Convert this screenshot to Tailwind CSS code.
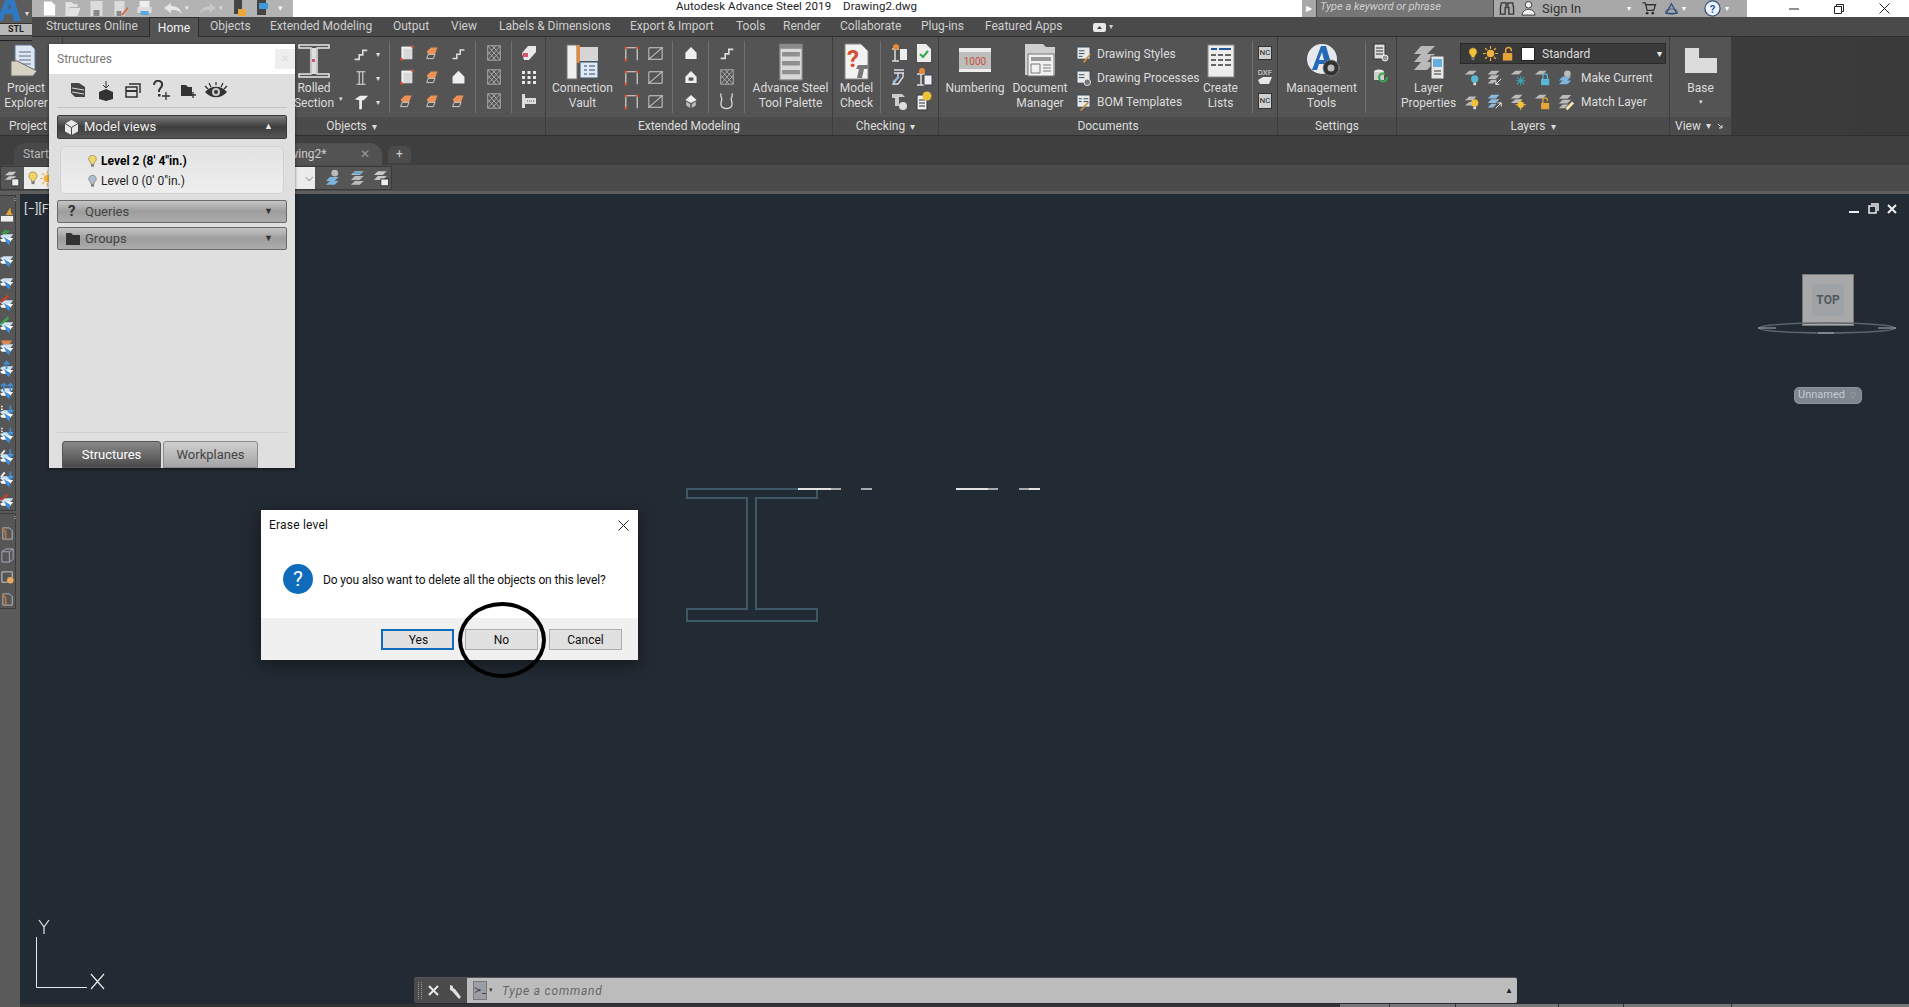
<!DOCTYPE html>
<html lang="en">
<head>
<meta charset="utf-8">
<title>Autodesk Advance Steel 2019</title>
<script src="https://cdn.jsdelivr.net/npm/@tailwindcss/browser@4"></script>
</head>
<body class="m-0">
<svg width="0" height="0" class="absolute">
  <defs>
    <symbol id="bulb" viewBox="0 0 16 16"><path d="M8 1a4.500 4.500 0 0 0-3 8c1 1 1 2 1.200 3h3.600c.2-1 .2-2 1.200-3A4.500 4.500 0 0 0 8 1z" fill="currentColor" stroke="#6b5a2a" stroke-width=".6"/><rect x="6.300" y="12" width="3.400" height="3" fill="#777"/></symbol>
    <symbol id="sun" viewBox="0 0 16 16"><circle cx="8" cy="8" r="4" fill="#f2b13c"/><path d="M8 0v3M8 13v3M0 8h3M13 8h3M2.300 2.300l2 2M11.700 11.700l2 2M13.700 2.300l-2 2M4.300 11.700l-2 2" stroke="#f2b13c" stroke-width="1.300"/></symbol>
    <symbol id="lock" viewBox="0 0 16 16"><rect x="2" y="7" width="10" height="8" fill="#e7a33a"/><path d="M5 7V4a3 3 0 0 1 6 0v1" fill="none" stroke="#e7a33a" stroke-width="1.600"/></symbol>
    <symbol id="boxo" viewBox="0 0 20 20"><rect x="4" y="3" width="12" height="14" fill="#d8d8d8"/><path d="M4 3h12v2H6v12H4z" fill="#f4f4f4"/><circle cx="16" cy="3" r="1.500" fill="#e0502c"/><circle cx="4" cy="17" r="1.500" fill="#e0502c"/></symbol>
    <symbol id="orange" viewBox="0 0 20 20"><path d="M3 8l5-5h8l-3 8H5z" fill="#e99055"/><path d="M5 11h8l-2 5H3z" fill="none" stroke="#ddd"/></symbol>
    <symbol id="mesh" viewBox="0 0 20 20"><path d="M3 2l14 16M8 2l9 10M3 8l9 10M17 2L3 18M12 2L3 12M17 8l-9 10M3 2h14v16H3z" fill="none" stroke="#bbb" stroke-width=".9"/></symbol>
    <symbol id="frame" viewBox="0 0 20 20"><path d="M4 17V4h12v13" fill="none" stroke="#ddd" stroke-width="1.200"/><circle cx="4" cy="4" r="1.400" fill="#e0502c"/><circle cx="16" cy="4" r="1.400" fill="#e0502c"/><circle cx="4" cy="17" r="1.400" fill="#e0502c"/></symbol>
    <symbol id="zig" viewBox="0 0 20 20"><path d="M3 4h14L3 16h14" fill="none" stroke="#ccc" stroke-width="1.100"/><path d="M3 4v12M17 4v12" stroke="#ccc" stroke-width="1"/></symbol>
    <symbol id="house" viewBox="0 0 20 20"><path d="M10 2l7 7v8H3V9z" fill="#efefef"/></symbol>
    <symbol id="stair" viewBox="0 0 20 20"><path d="M3 16h5v-5h4V6h5" fill="none" stroke="#ddd" stroke-width="1.800"/></symbol>
    <symbol id="tee" viewBox="0 0 20 20"><path d="M3 7l6-4h9l-5 5h-2v10H8V8z" fill="#eee"/></symbol>
    <symbol id="ibeam" viewBox="0 0 20 20"><path d="M5 3h10M5 17h10M8 3v14M12 3v14" fill="none" stroke="#ddd" stroke-width="1.200"/></symbol>
    <symbol id="plate" viewBox="0 0 16 18"><path d="M0 8l4-2h10l-3 4H2z" fill="#cfe3f5"/><path d="M0 12l4-2h10l-3 4H2z" fill="#fff"/><path d="M4 9l3 6 3 3 1-5" fill="#3f8ed8"/></symbol>
    <symbol id="tool" viewBox="0 0 16 16"><path d="M3 2h7l3 3v9H3z" fill="none" stroke="#bbb"/><path d="M2 3l4 3v8" stroke="#b3764a" stroke-width="2" fill="none"/></symbol>
  </defs>
</svg>

<div class="relative w-[1909px] h-[1007px] overflow-hidden bg-[#222a33] font-['Roboto',sans-serif] flex flex-col">

  <!-- Application button -->
  <div class="absolute left-0 top-0 w-[32px] h-[41px] z-10 bg-[#5c5c5c] border-b border-[#222] flex flex-col">
    <div class="h-[23px] relative overflow-hidden">
      <svg class="absolute -left-[5px] -top-[8px] w-[28px] h-[30px]" viewBox="0 0 28 30"><path d="M2 29L12 3h6l8 26h-7l-2-7h-7l-2 7zM13 17h3l-1.500-6z" fill="#2f79c4"/></svg>
      <span class="absolute right-[3px] top-[10px] text-[8px] leading-[8px] text-[#ddd]">▾</span>
    </div>
    <div class="h-[13px] bg-[#b8b8b8] border-y border-[#333] text-center text-[9px] font-bold leading-[11px] text-[#222]">STL</div>
  </div>

  <!-- Title bar -->
  <header class="h-[17px] bg-white flex items-stretch shrink-0 overflow-hidden">
    <div class="w-[32px] shrink-0"></div>
    <div class="w-[261px] shrink-0 bg-[#b3b3b3] flex items-center pl-[10px] gap-[7px] text-[#f4f4f4]">
      <svg class="w-[15px] h-[16px]" viewBox="0 0 16 16"><path d="M2 0h8l4 4v11H2z" fill="#fff"/></svg>
      <svg class="w-[17px] h-[16px]" viewBox="0 0 16 16"><path d="M1 1h6l2 2h4v3H5L2 15H1zM5 7h11l-3 8H2z" fill="#e2e2e2"/></svg>
      <svg class="w-[17px] h-[16px]" viewBox="0 0 16 16"><path d="M2 0h12v15H2z" fill="#dcdcdc"/><rect x="5" y="9" width="6" height="6" fill="#888"/></svg>
      <svg class="w-[17px] h-[16px]" viewBox="0 0 16 16"><path d="M2 0h10v15H2z" fill="#dcdcdc"/><rect x="4" y="10" width="5" height="5" fill="#888"/><path d="M9 13l6-7 1 1-6 8z" fill="#d9663a"/></svg>
      <svg class="w-[17px] h-[16px]" viewBox="0 0 16 16"><rect x="3" y="0" width="10" height="6" fill="#eee"/><rect x="1" y="6" width="14" height="6" fill="#ddd"/><rect x="4" y="10" width="8" height="4" fill="#58a7dd"/></svg>
      <svg class="w-[20px] h-[14px] ml-[3px]" viewBox="0 0 20 14"><path d="M1 6l7-5v3c6 0 10 3 11 8-3-4-6-4-11-4v3z" fill="#e8e8e8"/></svg>
      <span class="text-[7px] text-[#eee] -ml-[5px]">▾</span>
      <svg class="w-[18px] h-[14px] ml-[3px]" viewBox="0 0 20 14"><path d="M19 6l-7-5v3C6 4 2 7 1 12c3-4 6-4 11-4v3z" fill="#c8c8c8"/></svg>
      <span class="text-[7px] text-[#ddd] -ml-[5px]">▾</span>
      <svg class="w-[14px] h-[17px] ml-[3px]" viewBox="0 0 14 17"><rect x="1" y="0" width="8" height="14" fill="#444"/><rect x="5" y="9" width="8" height="7" fill="#eba73c"/></svg>
      <svg class="w-[14px] h-[17px] ml-[2px]" viewBox="0 0 14 17"><rect x="1" y="0" width="9" height="15" fill="#444"/><rect x="3" y="3" width="9" height="6" fill="#3f9ad8"/></svg>
      <span class="text-[9px] text-[#f4f4f4] ml-[1px]">▾</span>
    </div>
    <div class="w-[383px] shrink-0"></div>
    <div class="w-[300px] shrink-0 text-[11.5px] leading-[13px] text-[#222] whitespace-pre tracking-[.1px]">Autodesk Advance Steel 2019    Drawing2.dwg</div>
    <div class="w-[326px] shrink-0"></div>
    <div class="w-[445px] shrink-0 bg-[#a8a8a8] flex items-center">
      <span class="w-[14px] text-center text-[8px] text-white">▶</span>
      <div class="w-[178px] h-full bg-[#767676] border-x border-[#4a4a4a] text-[11px] italic leading-[13px] text-[#d0d0d0] pl-[3px]">Type a keyword or phrase</div>
      <svg class="w-[16px] h-[15px] ml-[5px]" viewBox="0 0 16 16"><path d="M2 2h5v5H6v7H1V7zM9 2h5l1 5v7h-5V7H9z" fill="none" stroke="#333" stroke-width="1.400"/></svg>
      <svg class="w-[17px] h-[15px] ml-[5px]" viewBox="0 0 16 16"><circle cx="8" cy="4" r="3.500" fill="#f2f2f2" stroke="#333"/><path d="M1 15c1-5 4-6 7-6s6 1 7 6z" fill="#f2f2f2" stroke="#333"/></svg>
      <span class="text-[13px] leading-[13px] text-[#333] ml-[5px] w-[85px]">Sign In</span>
      <span class="text-[8px] text-white w-[14px]">▾</span>
      <svg class="w-[16px] h-[15px]" viewBox="0 0 16 16"><path d="M1 2h3l2 8h7l2-6H5" fill="none" stroke="#333" stroke-width="1.400"/><circle cx="6" cy="13" r="1.500" fill="#333"/><circle cx="12" cy="13" r="1.500" fill="#333"/></svg>
      <svg class="w-[17px] h-[14px] ml-[6px]" viewBox="0 0 16 16"><path d="M8 2l6 11H2z" fill="none" stroke="#35507d" stroke-width="1.600"/><ellipse cx="8" cy="11" rx="7" ry="3" fill="none" stroke="#35507d"/></svg>
      <span class="text-[8px] text-white ml-[2px] w-[22px]">▾</span>
      <svg class="w-[17px] h-[17px]" viewBox="0 0 18 18"><circle cx="9" cy="9" r="8" fill="#eef4fb" stroke="#35507d" stroke-width="1.300"/><text x="9" y="13.500" text-anchor="middle" font-size="12" font-weight="700" fill="#2c5aa8" font-family="Roboto">?</text></svg>
      <span class="text-[8px] text-white ml-[4px]">▾</span>
    </div>
    <div class="flex-1 flex items-center text-[#222]">
      <svg class="w-[10px] h-[10px] ml-[42px]" viewBox="0 0 10 10"><path d="M0 5h10" stroke="#222"/></svg>
      <svg class="w-[10px] h-[10px] ml-[35px]" viewBox="0 0 10 10"><path d="M.5 2.500h7v7h-7zM2.500 2.500v-2h7v7h-2" fill="none" stroke="#222"/></svg>
      <svg class="w-[11px] h-[11px] ml-[35px]" viewBox="0 0 11 11"><path d="M.5.500l10 10M10.500.500l-10 10" stroke="#222"/></svg>
    </div>
  </header>

  <!-- Ribbon tabs -->
  <nav class="h-[20px] bg-[#4a4a4a] border-b border-[#303030] flex items-center shrink-0 pl-[46px] text-[12px] leading-[23px] text-[#cfcfcf] whitespace-nowrap">
    <span class="w-[103px]">Structures Online</span>
    <span class="w-[50px] h-[20px] mt-px bg-[#535353] border-x border-t border-[#2c2c2c] text-center text-[#f2f2f2] leading-[21px]">Home</span>
    <span class="w-[71px] pl-[11px]">Objects</span>
    <span class="w-[123px]">Extended Modeling</span>
    <span class="w-[58px]">Output</span>
    <span class="w-[48px]">View</span>
    <span class="w-[131px]">Labels &amp; Dimensions</span>
    <span class="w-[106px]">Export &amp; Import</span>
    <span class="w-[47px]">Tools</span>
    <span class="w-[57px]">Render</span>
    <span class="w-[81px]">Collaborate</span>
    <span class="w-[64px]">Plug-ins</span>
    <span class="w-[108px]">Featured Apps</span>
    <svg class="w-[13px] h-[9px] mt-[2px]" viewBox="0 0 13 9"><rect width="13" height="9" rx="2" fill="#e8e8e8"/><path d="M4 6l2.500-3L9 6z" fill="#444"/></svg>
    <span class="text-[8px] ml-[3px]">▾</span>
  </nav>

  <!-- Ribbon -->
  <section class="h-[98px] flex shrink-0 bg-gradient-to-r from-[#4c4c4c] to-[#3a3a3a] text-[12px] leading-[15px] text-[#dcdcdc] whitespace-nowrap">

    <!-- Project -->
    <div class="w-[63px] shrink-0 flex flex-col bg-[#545454] border-r border-[#3d3d3d]">
      <div class="h-[80px] flex flex-col items-center pt-[4px]">
        <svg class="w-[34px] h-[38px] mb-[2px] -ml-[13px]" viewBox="0 0 34 38"><path d="M7 4h16l4 4v22H7z" fill="#dfe6f1" stroke="#59708f"/><path d="M11 11h12M11 15h12M11 19h12M11 23h12" stroke="#59708f"/><path d="M3 20h6l20 10-4 5H3z" fill="#d6d2c3" stroke="#666"/></svg>
        <span class="text-center -ml-[10px]">Project<br>Explorer</span>
      </div>
      <div class="h-[18px] bg-[#4b4b4b] leading-[18px] pl-[9px]">Project</div>
    </div>

    <!-- Objects -->
    <div class="w-[483px] shrink-0 flex flex-col bg-[#545454] border-r border-[#3d3d3d]">
      <div class="h-[80px] flex justify-end">
        <div class="w-[50px] flex flex-col items-center pt-[4px] pr-[12px]">
          <svg class="w-[38px] h-[40px] shrink-0" viewBox="0 0 38 40"><path d="M4 4h30v3H22v26h12v3H4v-3h12V7H4z" fill="none" stroke="#e8e8e8" stroke-width="1.500"/><rect x="17" y="7" width="4" height="26" fill="#ddd"/><rect x="17" y="18" width="3" height="3" fill="#d8506a"/></svg>
          <span class="relative text-center">Rolled<br>Section<span class="absolute -right-[9px] bottom-[4px] text-[7px]">▾</span></span>
        </div>
        <div class="w-[44px] flex flex-col pt-[5px]">
          <div class="h-6 flex items-center pl-[7px]"><svg class="w-[18px] h-[18px]"><use href="#stair"/></svg><span class="text-[8px] ml-[6px]">▾</span></div>
          <div class="h-6 flex items-center pl-[7px]"><svg class="w-[18px] h-[18px]"><use href="#ibeam"/></svg><span class="text-[8px] ml-[6px]">▾</span></div>
          <div class="h-6 flex items-center pl-[7px]"><svg class="w-[18px] h-[18px]"><use href="#tee"/></svg><span class="text-[8px] ml-[6px]">▾</span></div>
        </div>
        <div class="w-px my-[4px] bg-[#717171]"></div>
        <div class="w-[85px] grid grid-cols-3 grid-rows-3 py-1 px-[4px] place-items-center">
          <svg class="w-[18px] h-[18px]"><use href="#boxo"/></svg><svg class="w-[17px] h-[17px]"><use href="#orange"/></svg><svg class="w-[17px] h-[17px]"><use href="#stair"/></svg>
          <svg class="w-[18px] h-[18px]"><use href="#boxo"/></svg><svg class="w-[17px] h-[17px]"><use href="#orange"/></svg><svg class="w-[17px] h-[17px]"><use href="#house"/></svg>
          <svg class="w-[17px] h-[17px]"><use href="#orange"/></svg><svg class="w-[17px] h-[17px]"><use href="#orange"/></svg><svg class="w-[17px] h-[17px]"><use href="#orange"/></svg>
        </div>
        <div class="w-px my-[4px] bg-[#717171]"></div>
        <div class="w-[35px] flex flex-col py-1 items-center">
          <div class="h-6 flex items-center"><svg class="w-[18px] h-[20px]"><use href="#mesh"/></svg></div>
          <div class="h-6 flex items-center"><svg class="w-[18px] h-[20px]"><use href="#mesh"/></svg></div>
          <div class="h-6 flex items-center"><svg class="w-[18px] h-[20px]"><use href="#mesh"/></svg></div>
        </div>
        <div class="w-px my-[4px] bg-[#717171]"></div>
        <div class="w-[33px] flex flex-col py-1 items-center">
          <div class="h-6 flex items-center"><svg class="w-[18px] h-[18px]" viewBox="0 0 18 18"><path d="M2 9l6-7h8v6l-7 8H4z" fill="#e8e8e8"/><path d="M3 9h5v4H3z" fill="#d8506a"/></svg></div>
          <div class="h-6 flex items-center"><svg class="w-[16px] h-[14px]" viewBox="0 0 16 14"><path d="M1 1h3v3H1zM6.500 1h3v3h-3zM12 1h3v3h-3zM1 6h3v3H1zM6.500 6h3v3h-3zM12 6h3v3h-3zM1 11h3v3H1zM6.500 11h3v3h-3zM12 11h3v3h-3z" fill="#e6e6e6"/></svg></div>
          <div class="h-6 flex items-center"><svg class="w-[16px] h-[16px]" viewBox="0 0 16 16"><path d="M1 1h3v14H1zM4 5h11v6H4z" fill="#ddd"/><path d="M6 8h8" stroke="#555" stroke-dasharray="1 1"/></svg></div>
        </div>
      </div>
      <div class="h-[18px] bg-[#4b4b4b] leading-[18px] text-center pl-[95px]">Objects <span class="text-[10px] ml-[2px]">▾</span></div>
    </div>

    <!-- Extended Modeling -->
    <div class="w-[287px] shrink-0 flex flex-col bg-[#545454] border-r border-[#3d3d3d]">
      <div class="h-[80px] flex">
        <div class="w-[73px] flex flex-col items-center pt-[4px]">
          <svg class="w-[36px] h-[40px] shrink-0" viewBox="0 0 36 40"><rect x="2" y="4" width="10" height="34" fill="#efefef" stroke="#777"/><rect x="12" y="4" width="3" height="18" fill="#e58a3c"/><rect x="15" y="6" width="18" height="14" fill="#d5d5d5"/><rect x="15" y="21" width="18" height="16" fill="#dfeaf4" stroke="#456"/><path d="M19 25h3M24 25h6M19 29h3M24 29h6M19 33h3M24 33h6" stroke="#346"/></svg>
          <span class="text-center">Connection<br>Vault</span>
        </div>
        <div class="w-[53px] grid grid-cols-2 grid-rows-3 py-1 pr-[5px] place-items-center">
          <svg class="w-[19px] h-[19px]"><use href="#frame"/></svg><svg class="w-[19px] h-[19px]"><use href="#zig"/></svg>
          <svg class="w-[19px] h-[19px]"><use href="#frame"/></svg><svg class="w-[19px] h-[19px]"><use href="#zig"/></svg>
          <svg class="w-[19px] h-[19px]"><use href="#frame"/></svg><svg class="w-[19px] h-[19px]"><use href="#zig"/></svg>
        </div>
        <div class="w-px my-[4px] bg-[#717171]"></div>
        <div class="w-[35px] flex flex-col py-1 items-center">
          <div class="h-6 flex items-center"><svg class="w-[16px] h-[17px]"><use href="#house"/></svg></div>
          <div class="h-6 flex items-center"><svg class="w-[16px] h-[17px]" viewBox="0 0 20 20"><path d="M10 2l7 7v8H3V9z" fill="#efefef"/><rect x="7" y="10" width="6" height="4" fill="#555"/></svg></div>
          <div class="h-6 flex items-center"><svg class="w-[16px] h-[17px]" viewBox="0 0 20 20"><path d="M10 2l7 6-7 4-7-4z" fill="#efefef"/><path d="M4 10l5 3v5l-5-3zM16 10l-5 3v5l5-3z" fill="#bbb"/></svg></div>
        </div>
        <div class="w-px my-[4px] bg-[#717171]"></div>
        <div class="w-[35px] flex flex-col py-1 items-center">
          <div class="h-6 flex items-center"><svg class="w-[18px] h-[18px]"><use href="#stair"/></svg></div>
          <div class="h-6 flex items-center"><svg class="w-[18px] h-[18px]"><use href="#mesh"/></svg></div>
          <div class="h-6 flex items-center"><svg class="w-[17px] h-[18px]" viewBox="0 0 18 18"><path d="M3 1v3c0 1 1 1 1 3L3 12c0 3 2 5 6 5s6-2 6-5l-1-5c0-2 1-2 1-3V1" fill="none" stroke="#ddd" stroke-width="1.300"/></svg></div>
        </div>
        <div class="w-px my-[4px] bg-[#717171]"></div>
        <div class="flex-1 flex flex-col items-center pt-[4px] pl-[4px]">
          <svg class="w-[30px] h-[40px] shrink-0" viewBox="0 0 26 36"><rect x="3" y="3" width="20" height="32" fill="#d9d9d9" stroke="#888"/><rect x="3" y="3" width="20" height="4" fill="#8a8a8a"/><path d="M5 10h16v4H5zM5 18h16v4H5zM5 26h16v4H5z" fill="#8f8f8f"/></svg>
          <span class="text-center">Advance Steel<br>Tool Palette</span>
        </div>
      </div>
      <div class="h-[18px] bg-[#4b4b4b] leading-[18px] text-center">Extended Modeling</div>
    </div>

    <!-- Checking -->
    <div class="w-[106px] shrink-0 flex flex-col bg-[#545454] border-r border-[#3d3d3d]">
      <div class="h-[80px] flex">
        <div class="w-[47px] flex flex-col items-center pt-[4px]">
          <svg class="w-[34px] h-[40px] shrink-0" viewBox="0 0 34 40"><path d="M5 3h16l7 7v28H5z" fill="#f2f2f2" stroke="#888"/><text x="13" y="26" font-size="24" font-weight="700" fill="#d4502e" font-family="Roboto" text-anchor="middle">?</text><path d="M18 24h12l-3 4h-3l-2 9h-5l2-9h-3z" fill="#777"/></svg>
          <span class="text-center">Model<br>Check</span>
        </div>
        <div class="w-px my-[4px] bg-[#717171]"></div>
        <div class="w-[57px] grid grid-cols-2 grid-rows-3 py-1 pr-[2px] pl-[6px] place-items-center">
          <svg class="w-[20px] h-[20px]" viewBox="0 0 20 20"><path d="M3 6h7M3 18h7M6 6v12" stroke="#ddd" stroke-width="1.500"/><rect x="11" y="6" width="7" height="11" fill="#eee"/><circle cx="7" cy="4" r="3" fill="#e58a3c"/></svg>
          <svg class="w-[18px] h-[20px]" viewBox="0 0 18 20"><path d="M2 1h9l5 5v13H2z" fill="#eee"/><path d="M5 11l3 3 5-6" stroke="#3aa54a" stroke-width="2" fill="none"/></svg>
          <svg class="w-[20px] h-[20px]" viewBox="0 0 20 20"><path d="M5 3h10M5 6h10M9 6v4l-5 7h5l5-7V6" stroke="#dde" fill="none" stroke-width="1.400"/><path d="M4 15l6-5" stroke="#8eb9e0" stroke-width="2"/></svg>
          <svg class="w-[20px] h-[20px]" viewBox="0 0 20 20"><path d="M3 7h8M3 18h8M7 7v11" stroke="#ddd" stroke-width="1.500"/><rect x="10" y="8" width="8" height="10" fill="#eee" stroke="#345"/><circle cx="8" cy="4" r="3" fill="#e58a3c"/></svg>
          <svg class="w-[20px] h-[20px]" viewBox="0 0 20 20"><path d="M3 3h10l3 3h-6v9H6V7H3z" fill="#ccc"/><circle cx="14" cy="15" r="4" fill="#ddd"/></svg>
          <svg class="w-[18px] h-[20px]" viewBox="0 0 18 20"><path d="M2 4h10v15H2z" fill="#eee" stroke="#333"/><path d="M4 9h6M4 12h6M4 15h6" stroke="#333"/><circle cx="12" cy="5" r="4.500" fill="#e9c43a"/></svg>
        </div>
      </div>
      <div class="h-[18px] bg-[#4b4b4b] leading-[18px] text-center">Checking <span class="text-[10px] ml-[2px]">▾</span></div>
    </div>

    <!-- Documents -->
    <div class="w-[339px] shrink-0 flex flex-col bg-[#545454] border-r border-[#3d3d3d]">
      <div class="h-[80px] flex">
        <div class="w-[72px] flex flex-col items-center pt-[4px]">
          <svg class="w-[36px] h-[40px] shrink-0" viewBox="0 0 36 40"><rect x="2" y="7" width="32" height="4" fill="#eee"/><rect x="2" y="11" width="32" height="17" fill="#bdbdbd"/><rect x="2" y="28" width="32" height="3" fill="#eee"/><text x="18" y="24" text-anchor="middle" font-size="10" fill="#c8503a" font-family="Roboto">1000</text></svg>
          <span class="text-center">Numbering</span>
        </div>
        <div class="w-[58px] flex flex-col items-center pt-[4px]">
          <svg class="w-[36px] h-[40px] shrink-0" viewBox="0 0 36 40"><path d="M3 3h18l3 3h9v28H3z" fill="#cfcfcf"/><rect x="6" y="13" width="26" height="22" fill="#f1f1f1" stroke="#777"/><rect x="9" y="16" width="20" height="4" fill="#999"/><path d="M9 23h9v9H9zM21 24h8M21 27h8M21 30h8" fill="none" stroke="#777"/></svg>
          <span class="text-center">Document<br>Manager</span>
        </div>
        <div class="w-[130px] flex flex-col pt-[5px] pl-[7px]">
          <div class="h-6 flex items-center gap-[6px]"><svg class="w-[15px] h-[17px] shrink-0" viewBox="0 0 16 18"><path d="M1 1h14v13H1z" fill="#e8e8e8" stroke="#345"/><path d="M3 5h6M3 8h6M3 11h4" stroke="#345"/><path d="M7 17l8-9 1 1-7 9z" fill="#c48a3c"/></svg>Drawing Styles</div>
          <div class="h-6 flex items-center gap-[6px]"><svg class="w-[15px] h-[17px] shrink-0" viewBox="0 0 16 18"><path d="M1 1h14v13H1z" fill="#e8e8e8" stroke="#345"/><path d="M3 5h6M3 8h6" stroke="#345"/><circle cx="12" cy="13" r="3.500" fill="#777" stroke="#eee"/></svg>Drawing Processes</div>
          <div class="h-6 flex items-center gap-[6px]"><svg class="w-[15px] h-[17px] shrink-0" viewBox="0 0 16 18"><path d="M1 1h14v13H1z" fill="#e8e8e8" stroke="#345"/><path d="M3 5h3M8 5h5M3 8h3M8 8h5" stroke="#345"/><path d="M4 17l9-9 1 1-8 9z" fill="#c48a3c"/></svg>BOM Templates</div>
        </div>
        <div class="w-[43px] flex flex-col items-center pt-[4px]">
          <svg class="w-[32px] h-[38px] mb-[2px] shrink-0" viewBox="0 0 32 38"><rect x="3" y="4" width="26" height="32" fill="#ededed" stroke="#888"/><path d="M6 8h6M14 8h12" stroke="#24569a" stroke-width="2"/><path d="M6 14h5M13 14h5M20 14h6M6 19h5M13 19h5M20 19h6M6 24h5M13 24h5M20 24h6" stroke="#666" stroke-width="2"/></svg>
          <span class="text-center">Create<br>Lists</span>
        </div>
        <div class="w-px my-[4px] ml-[10px] bg-[#717171]"></div>
        <div class="flex-1 flex flex-col py-1 items-center text-[8px] leading-[9px] text-[#222]">
          <div class="h-6 flex items-center"><span class="w-[14px] h-[14px] bg-[#cfcfcf] border border-[#333] text-center leading-[12px]">NC</span></div>
          <div class="h-6 flex items-center"><span class="w-[18px] text-center text-[#ddd] leading-[8px]">DXF<br><svg class="inline w-[16px] h-[7px]" viewBox="0 0 16 7"><path d="M1 3l5-3h9l-3 7H3z" fill="#e8e8e8"/></svg></span></div>
          <div class="h-6 flex items-center"><span class="w-[14px] h-[16px] bg-[#cfcfcf] border border-[#333] text-center leading-[14px]">NC</span></div>
        </div>
      </div>
      <div class="h-[18px] bg-[#4b4b4b] leading-[18px] text-center">Documents</div>
    </div>

    <!-- Settings -->
    <div class="w-[119px] shrink-0 flex flex-col bg-[#545454] border-r border-[#3d3d3d]">
      <div class="h-[80px] flex">
        <div class="w-[87px] flex flex-col items-center pt-[4px]">
          <svg class="w-[36px] h-[40px] shrink-0" viewBox="0 0 36 40"><circle cx="18" cy="18" r="15" fill="#e6e9ee"/><path d="M8 29L17 5h5l7 24h-6l-2-6h-6l-2 6zM15 19h5l-2-8z" fill="#2468b8"/><circle cx="27" cy="27" r="8" fill="#333" stroke="#999" stroke-dasharray="2 1"/><circle cx="27" cy="27" r="3.500" fill="#bbb"/></svg>
          <span class="text-center">Management<br>Tools</span>
        </div>
        <div class="w-px my-[4px] bg-[#717171]"></div>
        <div class="flex-1 flex flex-col py-1 items-center">
          <div class="h-6 flex items-center"><svg class="w-[16px] h-[20px]" viewBox="0 0 16 20"><rect x="1" y="1" width="11" height="15" fill="#ddd" stroke="#333"/><path d="M3 5h7M3 8h7M3 11h7" stroke="#333"/><circle cx="12" cy="15" r="3" fill="#999" stroke="#eee"/></svg></div>
          <div class="h-6 flex items-center"><svg class="w-[16px] h-[18px]" viewBox="0 0 16 18"><ellipse cx="6" cy="4" rx="5" ry="2.500" fill="#e8e8e8"/><rect x="1" y="4" width="10" height="8" fill="#cfcfcf"/><path d="M14 9a4 4 0 1 1-2-3" fill="none" stroke="#3aa54a" stroke-width="2"/></svg></div>
        </div>
      </div>
      <div class="h-[18px] bg-[#4b4b4b] leading-[18px] text-center">Settings</div>
    </div>

    <!-- Layers -->
    <div class="w-[273px] shrink-0 flex flex-col bg-[#545454] border-r border-[#3d3d3d]">
      <div class="h-[80px] flex">
        <div class="w-[63px] flex flex-col items-center pt-[4px]">
          <svg class="w-[36px] h-[40px] shrink-0" viewBox="0 0 36 40"><path d="M10 5h14l-8 8H3zM10 13h14l-8 8H3zM10 21h14l-8 8H3z" fill="#b9b9b9"/><rect x="20" y="15" width="13" height="23" fill="#e6e6e6" stroke="#555"/><rect x="22" y="18" width="9" height="8" fill="#67aee0"/><path d="M23 30h7M23 33h7" stroke="#333"/></svg>
          <span class="text-center">Layer<br>Properties</span>
        </div>
        <div class="flex-1 flex flex-col pr-[3px]">
          <div class="h-[21px] mt-[6px] mb-[2px] bg-[#3a3a3a] border border-[#2a2a2a] flex items-center pl-[5px] gap-[3px] leading-[16px]">
            <svg class="w-[14px] h-[18px] text-[#f2c13c]"><use href="#bulb"/></svg>
            <svg class="w-[15px] h-[15px]"><use href="#sun"/></svg>
            <svg class="w-[15px] h-[16px]"><use href="#lock"/></svg>
            <span class="w-[14px] h-[14px] bg-white border border-[#222] ml-[2px]"></span>
            <span class="flex-1 ml-[4px]">Standard</span>
            <span class="text-[10px] mr-[3px] text-[#eee]">▾</span>
          </div>
          <div class="h-6 flex items-center pl-[2px]">
            <div class="w-[20px] flex justify-center"><svg class="w-[18px] h-[18px]" viewBox="0 0 20 20"><path d="M7 2h8l-4 4H2z" fill="#bbb"/><circle cx="13" cy="11" r="4" fill="#58b8d8"/><rect x="11.500" y="15" width="3" height="3" fill="#ddd"/></svg></div>
            <div class="w-[24px] flex justify-center"><svg class="w-[18px] h-[18px]" viewBox="0 0 20 20"><path d="M7 2h9l-4 4H3zM7 7h9l-4 4H3zM7 12h6l-4 4H3z" fill="#bbb"/><path d="M18 11l-6 6M12 13v4h4" stroke="#fff" fill="none"/></svg></div>
            <div class="w-[24px] flex justify-center"><svg class="w-[18px] h-[18px]" viewBox="0 0 20 20"><path d="M7 2h8l-4 4H2z" fill="#bbb"/><path d="M13 8v10M8 13h10M9 9l8 8M17 9l-8 8" stroke="#3aa8b8" stroke-width="1.200"/></svg></div>
            <div class="w-[24px] flex justify-center"><svg class="w-[18px] h-[18px]" viewBox="0 0 20 20"><path d="M7 2h8l-4 4H2z" fill="#bbb"/><rect x="9" y="11" width="9" height="7" fill="#58b8d8"/><path d="M11 11V8a2.500 2.500 0 0 1 5 0v3" stroke="#58b8d8" fill="none" stroke-width="1.300"/></svg></div>
            <div class="w-[22px] flex justify-center"><svg class="w-[19px] h-[19px]" viewBox="0 0 20 20"><path d="M7 8h9l-4 4H3zM7 12h9l-4 4H3z" fill="#7fb4dc"/><circle cx="12" cy="5" r="3.500" fill="#bbb"/></svg></div>
            <span class="ml-[5px]">Make Current</span>
          </div>
          <div class="h-6 flex items-center pl-[1px]">
            <div class="w-[21px] flex justify-center"><svg class="w-[18px] h-[18px]" viewBox="0 0 20 20"><path d="M7 4h8l-4 4H2zM7 10h8l-4 4H2z" fill="#bbb"/><circle cx="13" cy="11" r="4" fill="#f2c13c"/><rect x="11.500" y="15" width="3" height="3" fill="#ddd"/></svg></div>
            <div class="w-[24px] flex justify-center"><svg class="w-[18px] h-[18px]" viewBox="0 0 20 20"><path d="M7 2h9l-4 4H3zM7 7h9l-4 4H3zM7 12h6l-4 4H3z" fill="#8fb9dc"/><path d="M12 17l6-6M14 11h4v4" stroke="#fff" fill="none"/></svg></div>
            <div class="w-[24px] flex justify-center"><svg class="w-[18px] h-[18px]" viewBox="0 0 20 20"><path d="M7 2h8l-4 4H2zM7 7h8l-4 4H2z" fill="#bbb"/><circle cx="13" cy="13" r="3.500" fill="#f2c13c"/><path d="M13 7v12M7 13h12" stroke="#f2c13c"/></svg></div>
            <div class="w-[24px] flex justify-center"><svg class="w-[18px] h-[18px]" viewBox="0 0 20 20"><path d="M7 2h8l-4 4H2z" fill="#bbb"/><rect x="9" y="11" width="9" height="7" fill="#e7a33a"/><path d="M11 11V8a2.500 2.500 0 0 1 5 0v1" stroke="#e7a33a" fill="none" stroke-width="1.300"/></svg></div>
            <div class="w-[22px] flex justify-center"><svg class="w-[19px] h-[19px]" viewBox="0 0 20 20"><path d="M7 2h9l-4 4H3zM7 7h9l-4 4H3zM7 12h6l-4 4H3z" fill="#bbb"/><path d="M11 17l7-7" stroke="#f4e4b0" stroke-width="3"/></svg></div>
            <span class="ml-[5px]">Match Layer</span>
          </div>
        </div>
      </div>
      <div class="h-[18px] bg-[#4b4b4b] leading-[18px] text-center">Layers <span class="text-[10px] ml-[2px]">▾</span></div>
    </div>

    <!-- View -->
    <div class="w-[62px] shrink-0 flex flex-col bg-[#545454] border-r border-[#3d3d3d]">
      <div class="h-[80px] flex flex-col items-center pt-[11px]">
        <svg class="w-[32px] h-[25px] mb-[8px]" viewBox="0 0 32 25"><path d="M0 0h14v10h18v15H0z" fill="#dcdcdc"/></svg>
        <span>Base</span>
        <span class="text-[7px] leading-[8px] mt-[2px]">▾</span>
      </div>
      <div class="h-[18px] bg-[#4b4b4b] leading-[18px] pl-[5px] flex items-center">View <span class="text-[10px] ml-[5px]">▾</span><svg class="w-[6px] h-[6px] ml-[6px]" viewBox="0 0 6 6"><path d="M1 1l4 4M5 2v3H2" stroke="#ddd" fill="none"/></svg></div>
    </div>
  </section>

  <!-- Document tabs -->
  <div class="h-[30px] bg-[#3f3f3f] border-t border-[#2f2f2f] flex items-end shrink-0 pl-[14px] text-[12px] text-[#b6b6b6] leading-[22px]">
    <div class="w-[36px] h-[22px] bg-[#484848] rounded-tl-[10px] pl-[9px]">Start</div>
    <div class="w-[122px] h-[22px] ml-[210px] bg-[#525252] rounded-tr-[12px] rounded-tl-[12px] flex pl-[11px] text-[#cfcfcf]"><span class="w-[89px]">Drawing2*</span><span class="text-[#9a9a9a]">✕</span></div>
    <div class="w-[23px] h-[17px] ml-[6px] mb-[2px] bg-[#4c4c4c] rounded-t-[6px] text-center leading-[16px] text-[#ccc]">+</div>
  </div>

  <!-- Layer toolbar -->
  <div class="h-[29px] bg-[#4b4b4b] flex items-start shrink-0 border-b-[3px] border-[#5f5f5f]">
    <div class="w-[392px] h-[24px] mt-px bg-[#565656] border border-[#3a3a3a] flex items-center">
      <svg class="w-[18px] h-[18px] ml-[2px]" viewBox="0 0 20 20"><path d="M7 3h8l-4 4H2zM7 8h8l-4 4H2z" fill="#c9c9c9"/><rect x="10" y="11" width="8" height="8" fill="#eee" stroke="#333"/></svg>
      <div class="w-[298px] h-[22px] ml-[3px] bg-[#ececec] flex items-center pl-[2px]">
        <svg class="w-[14px] h-[18px] text-[#f4d264]"><use href="#bulb"/></svg>
        <svg class="w-[15px] h-[15px]"><use href="#sun"/></svg>
        <span class="ml-auto text-[11px] text-[#555] mr-[2px]">⌵</span>
      </div>
      <svg class="w-[20px] h-[20px] ml-[8px]" viewBox="0 0 20 20"><path d="M7 9h9l-4 4H3zM7 13h9l-4 4H3z" fill="#7fb4dc"/><circle cx="12" cy="5" r="3.500" fill="#bbb"/></svg>
      <svg class="w-[20px] h-[20px] ml-[5px]" viewBox="0 0 20 20"><path d="M7 3h9l-4 4H3zM7 8h9l-4 4H3zM7 13h9l-4 4H3z" fill="#bbb"/><path d="M6 5h8" stroke="#58a7dd" stroke-width="2"/></svg>
      <svg class="w-[20px] h-[20px] ml-[4px]" viewBox="0 0 20 20"><path d="M7 3h9l-4 4H3zM7 8h9l-4 4H3z" fill="#c9c9c9"/><rect x="10" y="11" width="8" height="7" fill="#eee" stroke="#333"/></svg>
    </div>
  </div>

  <!-- Workspace -->
  <main class="flex-1 flex min-h-0">
    <aside class="w-[20px] shrink-0 bg-[#5a5a5a] pr-[4px] pt-[1px]">
      <div class="h-[316px] border border-l-0 border-[#3b3b3b] bg-[#565656] flex flex-col items-end">
        <div class="h-[6px] w-full text-[5px] leading-[6px] text-[#ddd] tracking-[-1px] text-right">::::</div>
        <div class="h-[4px]"></div>
        <svg class="w-[15px] h-[18px] mb-[4px]" viewBox="0 0 16 18"><path d="M1 10h13v6H1z" fill="#eee"/><path d="M6 9l5-8 1 6 2 2z" fill="#e7a33a"/></svg>
        <svg class="w-[15px] h-[18px] mb-[4px]" viewBox="0 0 16 18"><use href="#plate"/><path d="M1 5l5-4 5 2-5 3z" fill="#3a9a4a"/></svg>
        <svg class="w-[15px] h-[18px] mb-[4px]" viewBox="0 0 16 18"><use href="#plate"/></svg>
        <svg class="w-[15px] h-[18px] mb-[4px]" viewBox="0 0 16 18"><use href="#plate"/></svg>
        <svg class="w-[15px] h-[18px] mb-[4px]" viewBox="0 0 16 18"><use href="#plate"/><path d="M1 8l8-7" stroke="#c8402c" stroke-width="2.500"/></svg>
        <svg class="w-[15px] h-[18px] mb-[4px]" viewBox="0 0 16 18"><use href="#plate"/><path d="M1 8l8-7" stroke="#3aa54a" stroke-width="2.500"/></svg>
        <svg class="w-[15px] h-[18px] mb-[4px]" viewBox="0 0 16 18"><use href="#plate"/><path d="M1 2h12l-3 4H3z" fill="#dd8a50"/></svg>
        <svg class="w-[15px] h-[18px] mb-[4px]" viewBox="0 0 16 18"><use href="#plate"/><path d="M7 9V1M4 4l3-3 3 3" stroke="#3f8ed8" stroke-width="1.800" fill="none"/></svg>
        <svg class="w-[15px] h-[18px] mb-[4px]" viewBox="0 0 16 18"><use href="#plate"/><path d="M4 9V1M1 4l3-3 3 3M11 9V1M8 4l3-3 3 3" stroke="#3f8ed8" stroke-width="1.600" fill="none"/></svg>
        <svg class="w-[15px] h-[18px] mb-[4px]" viewBox="0 0 16 18"><use href="#plate"/><path d="M11 1v8M8 6l3 3 3-3" stroke="#3f8ed8" stroke-width="1.800" fill="none"/><path d="M1 2h2M1 5h2" stroke="#ddd" stroke-width="1.500"/></svg>
        <svg class="w-[15px] h-[18px] mb-[4px]" viewBox="0 0 16 18"><use href="#plate"/><path d="M11 1v8M8 6l3 3 3-3" stroke="#3f8ed8" stroke-width="1.800" fill="none"/><path d="M1 2h2M1 5h2" stroke="#ddd" stroke-width="1.500"/></svg>
        <svg class="w-[15px] h-[18px] mb-[4px]" viewBox="0 0 16 18"><use href="#plate"/><path d="M11 1v8M8 6l3 3 3-3" stroke="#3f8ed8" stroke-width="1.800" fill="none"/><path d="M1 7l4-5" stroke="#eee" stroke-width="2"/></svg>
        <svg class="w-[15px] h-[18px] mb-[4px]" viewBox="0 0 16 18"><use href="#plate"/><path d="M11 1v8M8 6l3 3 3-3" stroke="#3f8ed8" stroke-width="1.800" fill="none"/><path d="M1 7l4-5" stroke="#eee" stroke-width="2"/></svg>
        <svg class="w-[15px] h-[18px]" viewBox="0 0 16 18"><use href="#plate"/><path d="M1 8l7-6" stroke="#c8402c" stroke-width="2.500"/></svg>
      </div>
      <div class="h-[96px] mt-[2px] border border-l-0 border-[#3b3b3b] bg-[#565656] flex flex-col items-end gap-[5px]">
        <div class="h-[5px] w-full text-[5px] leading-[6px] text-[#ddd] tracking-[-1px] text-right">::::</div>
        <svg class="w-[15px] h-[17px] mt-[1px]"><use href="#tool"/></svg>
        <svg class="w-[15px] h-[17px]" viewBox="0 0 16 16"><path d="M2 4l4-3h8v11l-4 3H2zM2 4h8v11M10 4l4-3" fill="none" stroke="#aab"/></svg>
        <svg class="w-[15px] h-[17px]" viewBox="0 0 16 16"><path d="M2 2h11v6" fill="none" stroke="#ccc"/><path d="M2 2v11h6" fill="none" stroke="#ccc"/><circle cx="11" cy="11" r="3.500" fill="#eba85c"/></svg>
        <svg class="w-[15px] h-[17px]"><use href="#tool"/></svg>
      </div>
    </aside>
    <div class="flex-1 bg-[#222a33] flex flex-col">
      <div class="flex-1 pl-[4px] pt-[8px] text-[13px] leading-[14px] text-[#d5d5d5]">[−][F</div>
      <div class="h-[3px] bg-[#333] flex justify-end">
        <div class="w-[569px] h-[3px] bg-[#777] flex">
          <span class="w-[50px] border-r border-[#333]"></span><span class="w-[66px] border-r border-[#333]"></span><span class="w-[103px] border-r border-[#333]"></span><span class="w-[65px] border-r border-[#333]"></span><span class="w-[108px] border-r border-[#333]"></span>
        </div>
      </div>
    </div>
  </main>

  <!-- Structures palette -->
  <div class="absolute left-[49px] top-[44px] w-[246px] h-[424px] bg-[#dfdfdf] flex flex-col shadow-[0_1px_3px_rgba(0,0,0,.5)]">
    <div class="h-[30px] bg-white flex items-center justify-between shrink-0">
      <span class="pl-[8px] text-[12px] text-[#777]">Structures</span>
      <span class="w-[20px] h-[20px] bg-[#eeeeee] text-center text-[10px] leading-[20px] text-[#ddd] mr-0">✕</span>
    </div>
    <div class="h-[34px] mx-[8px] border-b border-[#c4c4c4] flex items-center pl-[12px] shrink-0">
      <svg class="w-[19px] h-[19px]" viewBox="0 0 19 19"><path d="M2 2h8l6 4v10H6L2 12z" fill="#444"/><path d="M3 7l12 2M3 11l12 2" stroke="#ddd"/></svg>
      <svg class="w-[16px] h-[20px] ml-[10px]" viewBox="0 0 16 20"><path d="M8 0v6M5 4l3 3 3-3" stroke="#333" fill="none"/><path d="M1 11l7-3 7 3v7l-7 2-7-2z" fill="#333"/></svg>
      <svg class="w-[16px] h-[17px] ml-[11px]" viewBox="0 0 16 17"><path d="M1 5h11v10H1zM4 2h11v9" fill="none" stroke="#333" stroke-width="1.500"/><path d="M1 9h11" stroke="#333" stroke-width="2"/></svg>
      <svg class="w-[17px] h-[22px] ml-[12px]" viewBox="0 0 17 22"><path d="M1 5c0-6 9-5 8 0 0 3-3 3-3 6v1" fill="none" stroke="#333" stroke-width="2"/><rect x="5" y="14" width="2.500" height="2.500" fill="#333"/><path d="M13 12v8M9 16h8" stroke="#333" stroke-width="1.300"/></svg>
      <svg class="w-[16px] h-[14px] ml-[10px]" viewBox="0 0 16 14"><path d="M1 1h5l2 2h4v9H1z" fill="#333"/><path d="M13 8v6M10 11h6" stroke="#333" stroke-width="1.300"/></svg>
      <svg class="w-[24px] h-[18px] ml-[8px]" viewBox="0 0 24 18"><path d="M1 10c6-7 16-7 22 0-6 7-16 7-22 0z" fill="#333"/><circle cx="12" cy="10" r="4" fill="#ccc"/><circle cx="12" cy="10" r="2" fill="#333"/><path d="M5 1l2 4M12 0v3M19 1l-2 4M1 4l3 3M23 4l-3 3" stroke="#333" stroke-width="1.300"/></svg>
    </div>
    <div class="mx-[8px] mt-[7px] h-[24px] rounded-[2px] bg-gradient-to-b from-[#7c7c7c] via-[#3e3e3e] to-[#555] border border-[#3b3b3b] flex items-center pl-[6px] pr-[13px] text-[13px] text-[#eee] shrink-0">
      <svg class="w-[15px] h-[15px] mr-[5px]" viewBox="0 0 15 15"><path d="M7.500 0l6.500 3.500v8L7.500 15 1 11.500v-8z" fill="#e8e8e8"/><path d="M7.500 7.500V15M7.500 7.500L14 3.500M7.500 7.500L1 3.500" stroke="#444"/></svg>
      <span class="flex-1">Model views</span><span class="text-[9px]">▲</span>
    </div>
    <div class="mx-[11px] mt-[7px] h-[48px] rounded-[5px] bg-gradient-to-b from-[#e3e3e3] to-[#eeeeee] border border-[#d2d2d2] text-[12px] leading-[19px] text-[#222] pl-[25px] pt-[4px] shrink-0">
      <div class="h-[20px] flex items-center gap-[2px] font-bold text-black"><svg class="w-[13px] h-[16px] text-[#f0d870]" viewBox="0 0 16 16"><use href="#bulb"/></svg>Level 2 (8' 4"in.)</div>
      <div class="h-[20px] flex items-center gap-[2px]"><svg class="w-[13px] h-[16px] text-[#a8c0d0]" viewBox="0 0 16 16"><use href="#bulb"/></svg>Level 0 (0' 0"in.)</div>
    </div>
    <div class="mx-[8px] mt-[6px] h-[23px] rounded-[2px] bg-gradient-to-b from-[#c6c6c6] via-[#9d9d9d] to-[#acacac] border border-[#6a6a6a] flex items-center pl-[10px] pr-[13px] text-[13px] text-[#444] shrink-0">
      <span class="w-[15px] font-bold text-[15px] text-[#333]">?</span><span class="flex-1 ml-[2px]">Queries</span><span class="text-[9px] text-[#333]">▼</span>
    </div>
    <div class="mx-[8px] mt-[4px] h-[23px] rounded-[2px] bg-gradient-to-b from-[#c6c6c6] via-[#9d9d9d] to-[#acacac] border border-[#6a6a6a] flex items-center pl-[8px] pr-[13px] text-[13px] text-[#444] shrink-0">
      <svg class="w-[14px] h-[12px] mr-[5px]" viewBox="0 0 14 12"><path d="M0 0h5l2 2h7v10H0z" fill="#333"/></svg>
      <span class="flex-1">Groups</span><span class="text-[9px] text-[#333]">▼</span>
    </div>
    <div class="flex-1"></div>
    <div class="mx-[8px] border-t border-[#cfcfcf] h-[36px] flex items-end pl-[5px] gap-[2px] text-[13px] shrink-0">
      <div class="w-[99px] h-[27px] bg-gradient-to-b from-[#8a8a8a] to-[#4a4a4a] border border-[#555] rounded-t-[3px] text-center leading-[26px] text-white">Structures</div>
      <div class="w-[95px] h-[27px] bg-gradient-to-b from-[#d0d0d0] to-[#a5a5a5] border border-[#8a8a8a] rounded-t-[3px] text-center leading-[26px] text-[#444]">Workplanes</div>
    </div>
  </div>

  <!-- Drawing content on the canvas -->
  <svg class="absolute left-[680px] top-[480px]" width="380" height="150" viewBox="680 480 380 150">
    <path d="M687 489h130v9h-61v111h61v12H687v-12h60V498h-60z" fill="none" stroke="#3f5a66" stroke-width="2"/>
    <path d="M798 489h33M956 489h32M1029 489h11" stroke="#e2e2e2" stroke-width="2"/>
    <path d="M831 489h10M861 489h11M988 489h10M1019 489h10" stroke="#a9a9a9" stroke-width="2"/>
  </svg>

  <!-- Viewport controls -->
  <div class="absolute left-[1849px] top-[203px] flex items-center gap-[8px] text-white">
    <svg class="w-[11px] h-[11px]" viewBox="0 0 11 11"><path d="M0 9h10" stroke="#eee" stroke-width="2"/></svg>
    <svg class="w-[11px] h-[11px]" viewBox="0 0 11 11"><path d="M1 3h7v7H1zM3 1h7v7" fill="none" stroke="#eee" stroke-width="1.500"/></svg>
    <svg class="w-[10px] h-[10px]" viewBox="0 0 10 10"><path d="M1 1l8 8M9 1l-8 8" stroke="#eee" stroke-width="2"/></svg>
  </div>

  <!-- View cube -->
  <div class="absolute left-[1802px] top-[274px] w-[52px] h-[52px] bg-[#a8a8a8] border border-[#777] flex items-center justify-center">
    <div class="w-[32px] h-[32px] bg-[#9fa3a6] flex items-center justify-center text-[12px] font-bold text-[#53585c]">TOP</div>
  </div>
  <svg class="absolute left-[1756px] top-[320px]" width="142" height="16" viewBox="0 0 142 16">
    <ellipse cx="71" cy="8" rx="68" ry="5" fill="none" stroke="#5c646b" stroke-width="1.500"/>
    <path d="M2 8h18M122 8h18" stroke="#b5b5b5"/><path d="M62 13h16" stroke="#b5b5b5"/>
  </svg>
  <div class="absolute left-[1794px] top-[387px] w-[68px] h-[17px] rounded-[5px] bg-[#7e8690] border border-[#8b9299] flex items-center pl-[3px] text-[11px] text-[#c7ccd1]">Unnamed<span class="ml-[5px] text-[8px] text-[#a9aeb4]">▽</span></div>

  <!-- UCS icon -->
  <svg class="absolute left-[30px] top-[918px]" width="80" height="74" viewBox="0 0 80 74">
    <path d="M6.500 19v50.500H57" fill="none" stroke="#e8e8e8" stroke-width="1"/>
    <path d="M9 2l5 7 5-7M14 9v7M61 56l13 15M74 56L61 71" fill="none" stroke="#e8e8e8" stroke-width="1.200"/>
  </svg>

  <!-- Command line -->
  <div class="absolute left-[414px] top-[977px] w-[1103px] h-[26px] flex rounded-[2px] border-t border-[#555] overflow-hidden">
    <div class="w-[53px] bg-[#4b4b4b] flex items-center pl-[4px] gap-[6px] shrink-0">
      <span class="w-[4px] h-[17px] border-x border-dotted border-[#999]"></span>
      <svg class="w-[11px] h-[11px]" viewBox="0 0 11 11"><path d="M1 1l9 9M10 1l-9 9" stroke="#e8e8e8" stroke-width="2"/></svg>
      <svg class="w-[14px] h-[16px] ml-[4px]" viewBox="0 0 14 16"><path d="M1 2l3 1v2l2 1 6 8-2 2-7-8-2-1z" fill="#e0e0e0"/></svg>
    </div>
    <div class="flex-1 bg-[#bcbcbd] flex items-center pl-[6px] pr-[4px]">
      <span class="w-[14px] h-[19px] bg-[#9b9ea2] border border-[#7a7a7a] text-[9px] leading-[17px] text-[#222] text-center">≻_</span>
      <span class="text-[7px] text-[#444] ml-[2px]">▾</span>
      <span class="ml-[9px] flex-1 text-[12px] italic text-[#666] tracking-[.8px]">Type a command</span>
      <span class="text-[8px] text-[#222]">▲</span>
    </div>
  </div>

  <!-- Erase level dialog -->
  <div class="absolute left-[261px] top-[510px] w-[377px] h-[150px] bg-white flex flex-col shadow-[0_4px_16px_rgba(0,0,0,.45)] text-[12px] text-[#111]">
    <div class="h-[30px] flex items-center justify-between pl-[8px] pr-[9px] shrink-0">
      <span class="tracking-[.2px]">Erase level</span>
      <svg class="w-[11px] h-[11px]" viewBox="0 0 11 11"><path d="M.5.500l10 10M10.500.500l-10 10" stroke="#222"/></svg>
    </div>
    <div class="flex-1 flex items-center pl-[22px]">
      <svg class="w-[30px] h-[30px] shrink-0" viewBox="0 0 30 30"><circle cx="15" cy="15" r="15" fill="#0f6cbd"/><text x="15" y="22" text-anchor="middle" font-size="21" fill="#fff" font-family="Roboto">?</text></svg>
      <span class="ml-[10px] mt-[2px] tracking-[-.13px]">Do you also want to delete all the objects on this level?</span>
    </div>
    <div class="h-[42px] bg-[#f0f0f0] flex items-start justify-end pt-[11px] pr-[16px] gap-[11px] shrink-0">
      <button class="w-[73px] h-[21px] bg-[#e1e1e1] border-2 border-[#0f6cbd] leading-[19px] text-center pl-[2px]">Yes</button>
      <button class="w-[73px] h-[21px] bg-[#e1e1e1] border border-[#adadad] leading-[21px] text-center">No</button>
      <button class="w-[73px] h-[21px] bg-[#e1e1e1] border border-[#adadad] leading-[21px] text-center">Cancel</button>
    </div>
  </div>
  <div class="absolute left-[458px] top-[602px] w-[88px] h-[76px] rounded-[50%] border-[4px] border-black"></div>
</div>
</body>
</html>
